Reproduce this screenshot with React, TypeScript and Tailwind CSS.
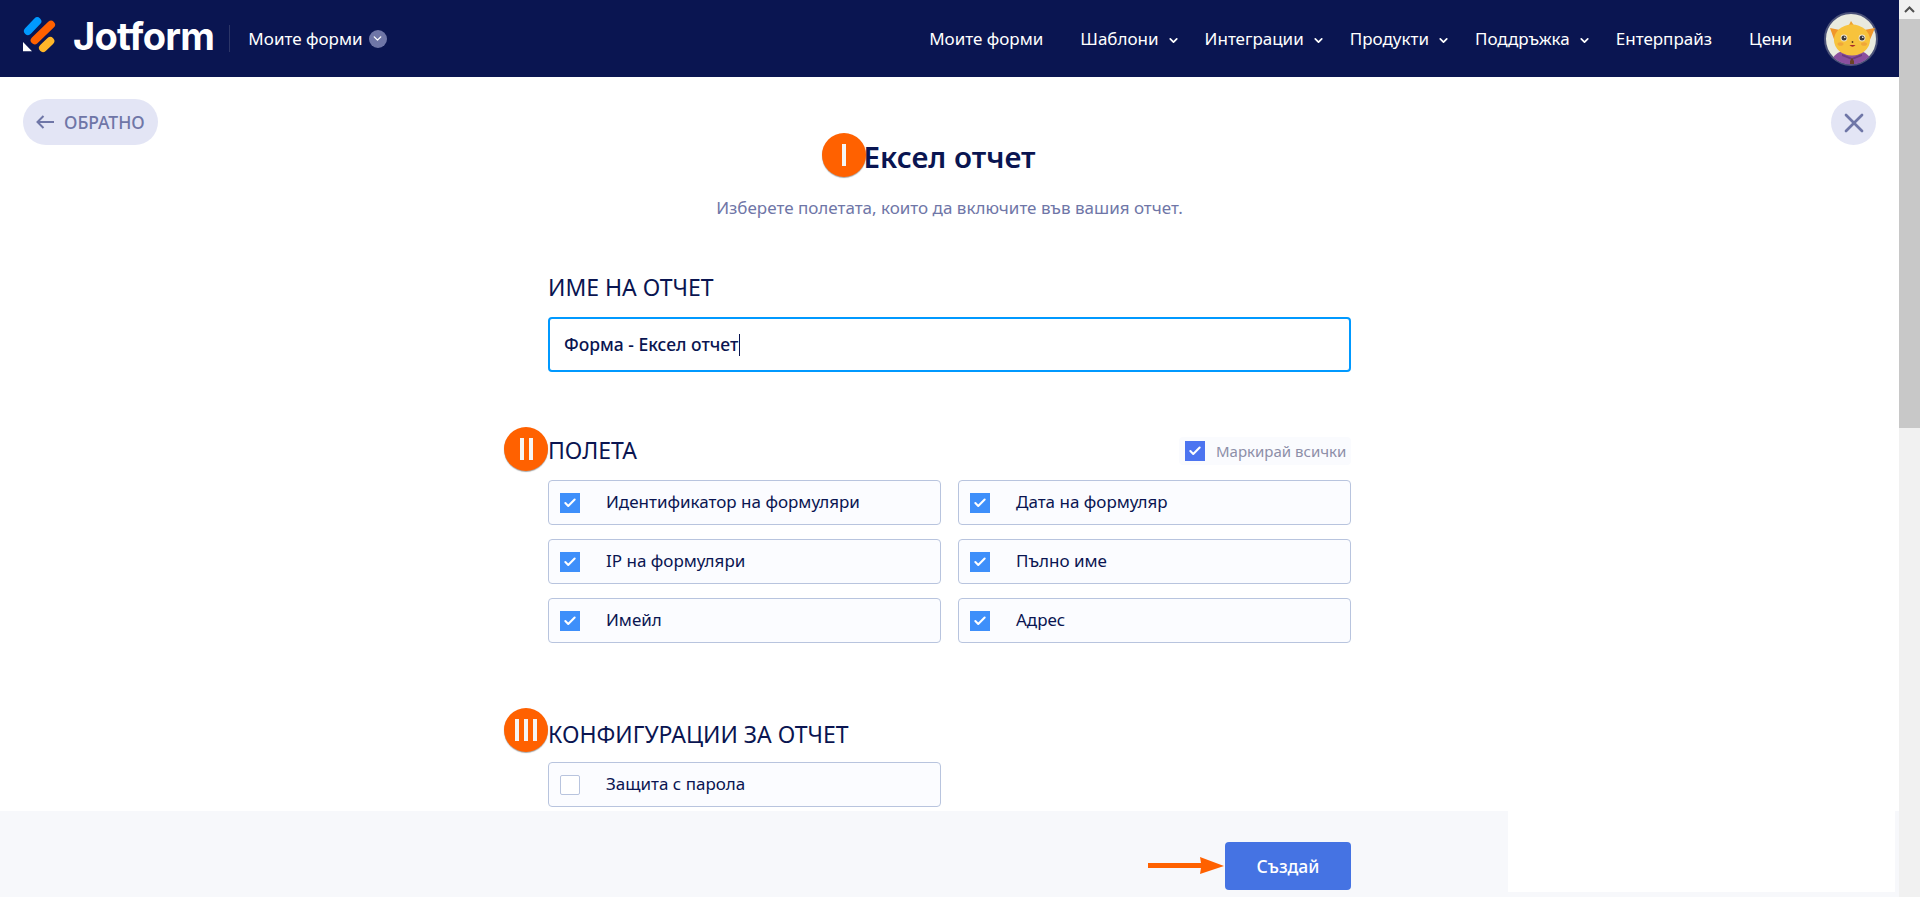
import { Check, ChevronDown, X } from "lucide-react";

const fields = [
  "Идентификатор на формуляри",
  "Дата на формуляр",
  "IP на формуляри",
  "Пълно име",
  "Имейл",
  "Адрес",
];

function Logo() {
  return (
    <svg width="32" height="35" viewBox="0 0 32 35" className="mb-[8px] shrink-0 overflow-visible">
      <line x1="5" y1="14" x2="14.3" y2="4.3" stroke="#0099ff" strokeWidth="8" strokeLinecap="round" />
      <line x1="11.7" y1="23.3" x2="28" y2="7.7" stroke="#ff6100" strokeWidth="8" strokeLinecap="round" />
      <line x1="20" y1="31" x2="27.3" y2="24" stroke="#ffb629" strokeWidth="8" strokeLinecap="round" />
      <path d="M0 25 L0 34.3 L9 34.3 Z" fill="#ffffff" />
    </svg>
  );
}

function Avatar() {
  return (
    <svg width="54" height="54" viewBox="0 0 54 54" className="shrink-0">
      <defs>
        <clipPath id="avatar-clip">
          <circle cx="27" cy="27" r="25.5" />
        </clipPath>
      </defs>
      <circle cx="27" cy="27" r="26" fill="#e9eadf" stroke="#4b5278" strokeWidth="2" />
      <g clipPath="url(#avatar-clip)">
        <path d="M6 54 Q8 42 18 39 L37 39 Q47 42 49 54 Z" fill="#8a4f9e" />
        <path d="M18 42 L28 46 L38 42 L38 44 L28 48 L18 44 Z" fill="#6d3a80" />
        <path d="M26 49 L28 46 L30 49 L30 52 L26 52 Z" fill="#6b4426" />
      </g>
      <path d="M6 16 L16 18 L11 30 Z" fill="#f0972a" />
      <path d="M51 16 L40 18 L45 30 Z" fill="#f0972a" />
      <path d="M24 15 L27 9 L31 15 Z" fill="#f0a22d" />
      <ellipse cx="28" cy="28" rx="18" ry="15.5" fill="#f7c33c" />
      <circle cx="20" cy="26" r="3.4" fill="#f4ead0" />
      <circle cx="38" cy="26" r="3.4" fill="#f4ead0" />
      <circle cx="20" cy="26" r="2.5" fill="#3e3a39" />
      <circle cx="38" cy="26" r="2.5" fill="#3e3a39" />
      <circle cx="20.8" cy="25.2" r="0.8" fill="#ffffff" />
      <circle cx="38.8" cy="25.2" r="0.8" fill="#ffffff" />
      <ellipse cx="16.5" cy="32" rx="3" ry="1.8" fill="#f0a63a" />
      <ellipse cx="40" cy="32" rx="3" ry="1.8" fill="#f0a63a" />
      <path d="M25.5 33 Q28.5 36.5 31.5 33 Z" fill="#a8282b" />
      <circle cx="28.5" cy="30" r="0.9" fill="#5b3a1e" />
    </svg>
  );
}

function NavItem({ label, menu, className = "" }: { label: string; menu?: boolean; className?: string }) {
  return (
    <div className={`flex items-center ${className}`}>
      <span>{label}</span>
      {menu && <ChevronDown className="ml-[8px] mt-[4px] h-[13px] w-[13px]" strokeWidth={3.2} />}
    </div>
  );
}

function Badge({ mark, className }: { mark: string; className: string }) {
  return (
    <div className={`absolute flex h-[44px] w-[44px] items-center justify-center gap-[5px] rounded-full bg-[#ff6100] shadow-[0_1px_1px_rgba(0,0,0,0.35)] ${className}`}>
      {Array.from(mark).map((_, i) => (
        <span key={i} className="h-[22px] w-[4px] bg-[#f5f5f5]" />
      ))}
    </div>
  );
}

function CheckBox({ checked, color = "bg-[#3e8ffa]" }: { checked: boolean; color?: string }) {
  if (!checked) {
    return <span className="h-[20px] w-[20px] shrink-0 rounded-[2px] border border-[#b8c4de] bg-white" />;
  }
  return (
    <span className={`flex h-[20px] w-[20px] shrink-0 items-center justify-center ${color}`}>
      <Check className="h-[14px] w-[14px] text-white" strokeWidth={3.5} />
    </span>
  );
}

function FieldRow({ label, checked = true }: { label: string; checked?: boolean }) {
  return (
    <div className="flex h-[45px] items-center gap-[26px] rounded-[4px] border border-[#b8c4de] bg-[#fbfcff] pl-[11px] text-[17px] text-[#0a1551]">
      <CheckBox checked={checked} />
      <span className="mb-[2px]">{label}</span>
    </div>
  );
}

export default function App() {
  return (
    <div className="flex h-[897px] overflow-hidden bg-white font-['Noto_Sans',sans-serif]">
      <div className="flex min-w-0 flex-1 flex-col">
        <header className="flex h-[77px] shrink-0 items-center bg-[#0a1551] pl-[23px] pr-[21px] text-white">
          <Logo />
          <span className="mb-[6px] ml-[18px] font-['Inter',sans-serif] text-[38px] font-bold leading-[46px] tracking-[-0.7px]">Jotform</span>
          <span className="ml-[15px] h-[27px] w-px bg-[#2c3567]" />
          <span className="ml-[18px] text-[17px]">Моите форми</span>
          <span className="ml-[6px] flex h-[18px] w-[18px] items-center justify-center rounded-full bg-[#6f76a7]">
            <ChevronDown className="h-[13px] w-[13px]" strokeWidth={2.5} />
          </span>
          <nav className="ml-auto flex items-center gap-[25px] text-[17px]">
            <NavItem label="Моите форми" className="pr-[12px]" />
            <NavItem label="Шаблони" menu />
            <NavItem label="Интеграции" menu />
            <NavItem label="Продукти" menu />
            <NavItem label="Поддръжка" menu />
            <NavItem label="Ентерпрайз" className="pr-[12px]" />
            <NavItem label="Цени" />
          </nav>
          <div className="ml-[32px]">
            <Avatar />
          </div>
        </header>

        <main className="relative min-h-0 flex-1 overflow-hidden">
          <button className="absolute left-[23px] top-[22px] flex h-[46px] w-[135px] items-center gap-[9px] rounded-full bg-[#e3e5f5] pl-[13px] text-[17.5px] font-medium text-[#6f76a7]">
            <svg width="19" height="14" viewBox="0 0 19 14" className="shrink-0">
              <path d="M18 7 L1.5 7 M7.5 1 L1.5 7 L7.5 13" fill="none" stroke="#6f76a7" strokeWidth="2" />
            </svg>
            ОБРАТНО
          </button>
          <button className="absolute right-[23px] top-[23px] flex h-[45px] w-[45px] items-center justify-center rounded-full bg-[#e3e5f5] text-[#6f76a7]">
            <X className="h-[32px] w-[32px]" strokeWidth={2} />
          </button>

          <div className="mx-auto flex w-[803px] flex-col pt-[61px]">
            <div className="relative flex justify-center">
              <h1 className="text-[29.5px] font-semibold leading-[38px] text-[#0a1551]">Ексел отчет</h1>
              <Badge mark="I" className="left-[274px] -top-[5px]" />
            </div>
            <p className="mt-[20px] text-center text-[17px] leading-[24px] text-[#6f76a7]">Изберете полетата, които да включите във вашия отчет.</p>

            <h2 className="mt-[53px] text-[23px] leading-[28px] text-[#0a1551]">ИМЕ НА ОТЧЕТ</h2>
            <div className="mt-[16px] flex h-[55px] items-center rounded-[4px] border-2 border-[#0099ff] pl-[14px] text-[17.5px] font-medium text-[#0a1551]">
              Форма - Ексел отчет
              <span className="ml-px h-[22px] w-px bg-[#0a1551]" />
            </div>

            <div className="relative mt-[64px] flex h-[30px] items-center justify-between">
              <Badge mark="II" className="-left-[44px] -top-[9px]" />
              <h2 className="mb-[3px] text-[23px] leading-[30px] text-[#0a1551]">ПОЛЕТА</h2>
              <div className="flex h-[28px] w-[172px] items-center gap-[11px] rounded-[4px] bg-[#fafbfe] pl-[6px] text-[15px] text-[#8d8fa8]">
                <CheckBox checked color="bg-[#4c74f0]" />
                <span>Маркирай всички</span>
              </div>
            </div>

            <div className="mt-[14px] grid grid-cols-2 gap-x-[17px] gap-y-[14px]">
              {fields.map((f) => (
                <FieldRow key={f} label={f} />
              ))}
            </div>

            <div className="relative mt-[76px] flex h-[30px] items-center">
              <Badge mark="III" className="-left-[44px] -top-[11px]" />
              <h2 className="mb-[1px] text-[23px] leading-[30px] text-[#0a1551]">КОНФИГУРАЦИИ ЗА ОТЧЕТ</h2>
            </div>
            <div className="mt-[13px] grid grid-cols-2 gap-x-[17px]">
              <FieldRow label="Защита с парола" checked={false} />
            </div>
          </div>
        </main>

        <footer className="flex h-[86px] shrink-0 items-start bg-[#f7f8fb]">
          <div className="flex h-full w-[1508px] shrink-0 items-start justify-end pr-[157px] pt-[31px]">
            <svg width="77" height="18" viewBox="0 0 77 18" className="mt-[15px] shrink-0">
              <path d="M0 6 L53 6 L52 0 L76 9 L52 17 L53 11 L0 11 Z" fill="#ff6100" />
            </svg>
            <button className="h-[48px] w-[126px] shrink-0 rounded-[4px] bg-[#4573e3] text-[17.5px] font-medium text-white">Създай</button>
          </div>
          <div className="h-[81px] w-[387px] shrink-0 bg-white" />
        </footer>
      </div>

      <div className="flex w-[21px] shrink-0 flex-col bg-[#f1f1f1]">
        <div className="flex h-[19px] items-center justify-center bg-[#f1f1f1]">
          <svg width="11" height="7" viewBox="0 0 11 7">
            <path d="M1 6 L5.5 1.5 L10 6" fill="none" stroke="#505050" strokeWidth="2" />
          </svg>
        </div>
        <div className="h-[409px] bg-[#c8c8c8]" />
      </div>
    </div>
  );
}
